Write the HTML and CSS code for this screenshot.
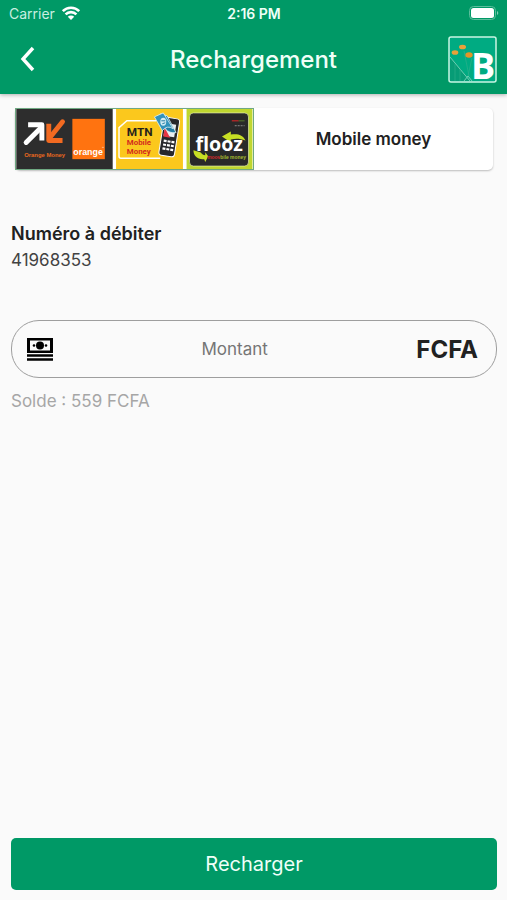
FILE: index.html
```html
<!DOCTYPE html>
<html lang="fr">
<head>
    <meta charset="UTF-8">
    <meta name="viewport" content="width=device-width, initial-scale=1.0">
    <title>Rechargement</title>
    <link rel="stylesheet" href="styles.css">
</head>
<body>
    <header class="header">
        <div class="status-bar">
            <div class="carrier">
                <span>Carrier</span>
                <svg class="wifi" viewBox="0 0 18 14">
                    <path d="M0.8 5.200a11.500 11.500 0 0 1 16.400 0M3.600 8.400a7.600 7.600 0 0 1 10.800 0" fill="none" stroke="#fff" stroke-width="2.600"/>
                    <path d="M9 14L5.800 10.800a4.400 4.400 0 0 1 6.400 0z" fill="#fff"/>
                </svg>
            </div>
            <span class="time">2:16 PM</span>
            <svg class="battery" viewBox="0 0 30 14">
                <rect x="0.5" y="0.5" width="26" height="13" rx="4" fill="none" stroke="#5cbd9b"/>
                <rect x="2" y="2" width="23" height="10" rx="2.5" fill="#fff"/>
                <path d="M28 5v4a2.2 2.2 0 0 0 0-4z" fill="#7fcbb1"/>
            </svg>
        </div>
        <div class="nav-bar">
            <button class="back" type="button" aria-label="Retour">
                <svg viewBox="0 0 16 26">
                    <path d="M15 2L5 13l10 11" fill="none" stroke="#fff" stroke-width="3.400"/>
                </svg>
            </button>
            <h1>Rechargement</h1>
            <svg class="logo" viewBox="0 0 49 47">
                <rect x="1" y="1" width="47" height="45" rx="2" fill="#00ab82" stroke="#c9f5e3" stroke-width="1.500"/>
                <path d="M2 21l21 24H2z" fill="#079c76"/>
                <path d="M2 21l20 24M16 45l4-5 4 5" fill="none" stroke="#6fd0b4"/>
                <path d="M7 28v17M12 33v12M16 15l5 25M24 22l-4 18" fill="none" stroke="#2bb08b" stroke-width="0.700"/>
                <ellipse cx="7" cy="16.500" rx="3.300" ry="2.300" fill="#e9a13a"/>
                <ellipse cx="14.500" cy="11" rx="3.500" ry="2.300" fill="#e9a13a"/>
                <ellipse cx="21" cy="19" rx="3.700" ry="2.700" fill="#e39427"/>
                <text x="23" y="43" class="logo-letter">B</text>
            </svg>
        </div>
    </header>

    <main class="content">
        <section class="card">
            <div class="operators">
                <svg class="orange" viewBox="0 0 98 61">
                    <rect width="98" height="61" fill="#2d2d2d"/>
                    <path d="M10 34L24 20" stroke="#fff" stroke-width="5" stroke-linecap="round" fill="none"/>
                    <path d="M12 16h14v16" stroke="#fff" stroke-width="5" stroke-linejoin="round" fill="none"/>
                    <path d="M47 13L35 28" stroke="#f26a21" stroke-width="5" stroke-linecap="round" fill="none"/>
                    <path d="M33 15v17h14" stroke="#f26a21" stroke-width="5" stroke-linejoin="round" fill="none"/>
                    <text x="8" y="49" class="orange-money" fill="#e8681f">Orange Money</text>
                    <rect x="57" y="10" width="33" height="41" fill="#ff7310"/>
                    <text x="58" y="47" class="orange-name" fill="#fff">orange</text>
                    <path d="M87 39h2" stroke="#ffc79c" stroke-width="0.800"/>
                </svg>
                <svg class="mtn" viewBox="0 0 68 61">
                    <rect width="68" height="61" fill="#fbc81d"/>
                    <path d="M41 12H11l-8 7v29q0 2 2 2h40" fill="none" stroke="#fff" stroke-width="1.500"/>
                    <text x="11" y="27" class="mtn-name" fill="#26231b">MTN</text>
                    <text x="11" y="37" class="mtn-money" fill="#d32c1e">Mobile</text>
                    <text x="11" y="46" class="mtn-money" fill="#d32c1e">Money</text>
                    <g transform="rotate(9 54 29)">
                        <rect x="46" y="9" width="16" height="39" rx="3" fill="#27282c" stroke="#fff"/>
                        <rect x="48" y="15" width="11" height="13" fill="#e8edf0"/>
                        <path d="M48 20l7 9h-7z" fill="#e73543"/>
                        <path d="M49 33h3m1 0h3m1 0h3M49 37h3m1 0h3m1 0h3M49 41h3m1 0h3m1 0h3" stroke="#fff" stroke-width="2.200"/>
                    </g>
                    <path d="M45 5l7 2 9 17q-7 1-11-4z" fill="#237ca4" stroke="#e3f3f6" stroke-width="0.800"/>
                    <path d="M39 8l9-4 10 16q-6-4-11 2z" fill="#3292bb" stroke="#e3f3f6" stroke-width="0.800"/>
                    <ellipse cx="48" cy="13" rx="3" ry="4" fill="#d5edf3"/>
                    <path d="M46 12h4M47 15l3-1" stroke="#237ca4"/>
                </svg>
                <svg class="flooz" viewBox="0 0 67 61">
                    <rect width="67" height="61" fill="#bfd62f"/>
                    <rect x="3" y="4" width="60" height="54" rx="4" fill="#292929" stroke="#e4ecae" stroke-width="0.700"/>
                    <path d="M36 28l9-5v3c7-1 12 0 15 6-6-2-10-2-15-1v3z" fill="#c8df24"/>
                    <path d="M7 42l7 2c2 2 3 3 5 3v-3l3 4-3 6-1-3c-6 1-11-3-11-9z" fill="#c8df24"/>
                    <text x="9" y="43" class="flooz-name" fill="#fff">flooz</text>
                    <text x="21" y="51" class="flooz-sub" fill="#a6bd30"><tspan fill="#d32a2c">moov</tspan>bile money</text>
                    <path d="M46 12h7" stroke="#c62828" stroke-width="1.200"/>
                    <path d="M53 12h6" stroke="#4f6d2d" stroke-width="1.200"/>
                    <path d="M49 17h10" stroke="#8d8d8d" stroke-dasharray="2 1"/>
                </svg>
            </div>
            <h2>Mobile money</h2>
        </section>

        <section class="account">
            <h3>Numéro à débiter</h3>
            <p>41968353</p>
        </section>

        <form class="recharge-form" id="rechargeForm">
            <label class="amount" for="montant">
                <svg class="cash" viewBox="0 0 26 23">
                    <path d="M0 0h26v15H0z" fill="#000"/>
                    <path d="M3 2.500h20v10H3z" fill="#fafafa"/>
                    <circle cx="13" cy="7.500" r="4" fill="#000"/>
                    <circle cx="7" cy="7.500" r="1.300" fill="#000"/>
                    <circle cx="19" cy="7.500" r="1.300" fill="#000"/>
                    <path d="M0 17.500h26M0 21.500h26" stroke="#000" stroke-width="2.400"/>
                </svg>
                <input type="text" id="montant" inputmode="numeric" placeholder="Montant" aria-label="Montant">
                <span class="currency">FCFA</span>
            </label>
            <p class="balance">Solde : 559 FCFA</p>
        </form>
    </main>

    <footer class="footer">
        <button class="submit" type="submit" form="rechargeForm">Recharger</button>
    </footer>
</body>
</html>
```
FILE: styles.css
```css
* {
    box-sizing: border-box;
}
body {
    display: flex;
    flex-direction: column;
    min-height: 100vh;
    margin: 0;
    font-family: Inter, "Liberation Sans", sans-serif;
    background: #fafafa;
    color: #212121;
}
h1, h2, h3, p {
    margin: 0;
}
svg {
    display: block;
    flex: none;
    overflow: visible;
}
.header {
    padding-bottom: 4px;
    background: #009966;
    color: #effff8;
    box-shadow: 0 1px 4px rgba(0, 0, 0, 0.3);
}
.status-bar {
    display: grid;
    grid-template-columns: 1fr auto 1fr;
    align-items: center;
    height: 26px;
    padding: 0 8px 0 9px;
    font-size: 14px;
}
.carrier {
    display: flex;
    align-items: center;
    gap: 7px;
    color: #c9eee0;
}
.wifi {
    width: 18px;
    height: 14px;
}
.time {
    font-weight: 600;
}
.battery {
    width: 30px;
    height: 14px;
    justify-self: end;
}
.nav-bar {
    display: grid;
    grid-template-columns: 1fr auto 1fr;
    align-items: center;
    height: 64px;
    padding: 2px 10px 0;
}
.nav-bar h1 {
    font-size: 24px;
    font-weight: 500;
}
.back {
    justify-self: start;
    padding: 8px;
    border: 0;
    background: none;
    cursor: pointer;
}
.back svg {
    width: 16px;
    height: 26px;
}
.logo {
    width: 49px;
    height: 47px;
    justify-self: end;
}
.logo-letter {
    font: bold 36px "Open Sans", sans-serif;
    fill: #fff;
}
.content {
    flex: 1;
    padding: 14px 10px 0 11px;
}
.card {
    display: flex;
    align-items: center;
    margin: 0 4px;
    background: #fff;
    border-radius: 5px;
    box-shadow: 0 1px 2px rgba(0, 0, 0, 0.25);
}
.operators {
    display: flex;
    gap: 3px;
    border: 1px solid #6fa982;
}
.orange {
    width: 97px;
    height: 60px;
}
.mtn {
    width: 67px;
    height: 60px;
}
.flooz {
    width: 67px;
    height: 60px;
}
.orange-money {
    font: bold 6px "Liberation Sans", sans-serif;
}
.orange-name {
    font: bold 9px "Liberation Sans", sans-serif;
}
.mtn-name {
    font: bold 12px Roboto, sans-serif;
}
.mtn-money {
    font: bold 8px Roboto, sans-serif;
}
.flooz-name {
    font: bold 20px "Open Sans", sans-serif;
}
.flooz-sub {
    font: bold 5px "Liberation Sans", sans-serif;
}
.card h2 {
    flex: 1;
    font-size: 17px;
    font-weight: 600;
    text-align: center;
}
.account {
    margin-top: 50px;
    font-size: 17px;
    line-height: 27px;
}
.account h3 {
    font-size: 18px;
    font-weight: 600;
}
.account p {
    color: #424242;
}
.recharge-form {
    margin-top: 46px;
}
.amount {
    display: flex;
    align-items: center;
    height: 58px;
    padding: 0 18px 0 15px;
    border: 1px solid #9e9e9e;
    border-radius: 28px;
}
.cash {
    width: 26px;
    height: 23px;
}
.amount input {
    flex: 1;
    min-width: 0;
    padding: 0;
    border: 0;
    outline: 0;
    background: none;
    font: inherit;
    font-size: 17px;
    text-align: center;
}
.amount input::placeholder {
    color: #757575;
    opacity: 1;
}
.currency {
    font-size: 24px;
    font-weight: 700;
}
.balance {
    margin-top: 12px;
    font-size: 17px;
    line-height: 22px;
    color: #a6a6a6;
}
.footer {
    padding: 10px 10px 10px 11px;
}
.submit {
    display: block;
    width: 100%;
    height: 52px;
    border: 0;
    border-radius: 5px;
    background: #009966;
    color: #effff8;
    font-family: inherit;
    font-size: 20px;
    cursor: pointer;
}
```
